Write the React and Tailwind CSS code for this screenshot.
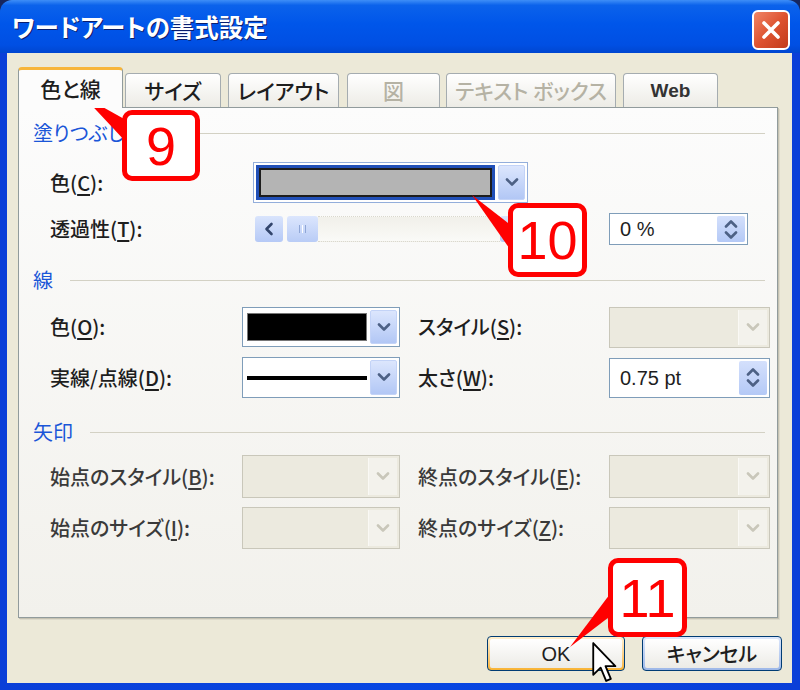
import React from "react";

// WordArt format dialog (Windows XP look, scaled 2x) with red step callouts
const jp = "font-['Noto_Sans_CJK_JP',sans-serif] [font-feature-settings:'palt']";

const Chevron = ({ up = false, color = "#4D6185" }) => (
  <svg width="14" height="9" viewBox="0 0 14 9">
    <path
      d={up ? "M2 7.5 L7 2.5 L12 7.5" : "M2 1.5 L7 6.5 L12 1.5"}
      fill="none"
      stroke={color}
      strokeWidth="2.6"
      strokeLinecap="round"
      strokeLinejoin="round"
    />
  </svg>
);

const DropBtn = ({ disabled }) =>
  disabled ? (
    <div className="w-[29px] flex items-center justify-center bg-[#F3F2EC] border-l border-[#FAF9F5]">
      <Chevron color="#C9C7BA" />
    </div>
  ) : (
    <div className="w-[27px] flex items-center justify-center rounded-[2px] border border-[#C3D3F7] bg-gradient-to-b from-[#DCE6FD] to-[#B2C7F5]">
      <Chevron />
    </div>
  );

const Combo = ({ className, disabled, children }) => (
  <div
    className={
      "flex items-stretch p-[2px] border " +
      (disabled ? "border-[#C9C7BA] bg-[#ECEADF] " : "border-[#7F9DB9] bg-white ") +
      className
    }
  >
    <div className="flex-1 flex items-stretch mr-[3px]">{children}</div>
    <DropBtn disabled={disabled} />
  </div>
);

const Spin = ({ className, value }) => (
  <div className={"flex items-stretch p-[2px] border border-[#7F9DB9] bg-white " + className}>
    <div className="flex-1 flex items-center pl-[8px] text-[20px] text-[#1E1E1E] font-['Liberation_Sans',sans-serif]">
      {value}
    </div>
    <div className="w-[28px] flex flex-col items-center justify-center gap-[3px] rounded-[2px] bg-gradient-to-b from-[#D4E0FC] to-[#B4C9F6]">
      <Chevron up />
      <Chevron />
    </div>
  </div>
);

const Label = ({ className = "", children }) => (
  <div className={"text-[20px] leading-[24px] font-medium text-[#1E1E1E] whitespace-nowrap " + className}>{children}</div>
);

const Key = ({ children }) => <span className="underline underline-offset-[3px]">{children}</span>;

const Header = ({ children }) => (
  <div className="h-[20px] flex items-center pl-[14px] pr-[12px]">
    <span className="text-[20px] leading-[20px] text-[#1A56D8]">{children}</span>
    <div className="flex-1 h-px ml-[17px] bg-[#D3D1C4]" />
  </div>
);

const Tab = ({ className, selected, disabled, children }) => (
  <div
    className={
      "flex items-center justify-center rounded-t-[4px] border border-b-0 text-[21px] font-medium " +
      (selected
        ? "h-[41px] z-10 border-[#919B9C] border-t-[3px] border-t-[#F7B53A] bg-[#FCFCFC] text-[#1E1E1E] "
        : "h-[35px] mt-[6px] border-[#A5ACB0] bg-gradient-to-b from-white to-[#ECEBE5] " +
          (disabled ? "text-[#B5B2A4] " : "text-[#1E1E1E] ")) +
      className
    }
  >
    {children}
  </div>
);

const Callout = ({ className, n }) => (
  <div
    className={
      "absolute flex items-center justify-center rounded-[10px] border-[5px] border-[#FF0000] bg-white text-[#FF0000] text-[54px] leading-none font-['Liberation_Sans_Narrow','Liberation_Sans',sans-serif] " +
      className
    }
  >
    {n}
  </div>
);

export default function App() {
  return (
    <div className={"relative w-[800px] h-[690px] bg-[#16265e] overflow-hidden " + jp}>
      <div className="h-full flex flex-col rounded-t-[12px] overflow-hidden">
        {/* title bar */}
        <div className="h-[53px] flex items-center justify-between pl-[12px] pr-[10px] bg-[linear-gradient(to_bottom,#3E8EF7_0%,#0B62EB_10%,#0056EA_45%,#004FE3_85%,#0046D0_100%)]">
          <span className="text-white text-[24.5px] font-bold [text-shadow:1px_1px_0_#0A1E6E] mt-[2px]">
            ワードアートの書式設定
          </span>
          <div className="w-[38px] h-[40px] mt-[6px] rounded-[6px] border-2 border-white flex items-center justify-center bg-gradient-to-br from-[#F08566] via-[#DE5330] to-[#C23C1B]">
            <svg width="22" height="22" viewBox="0 0 22 22">
              <path d="M4 4 L18 18 M18 4 L4 18" stroke="white" strokeWidth="3.6" strokeLinecap="round" />
            </svg>
          </div>
        </div>

        {/* frame + body */}
        <div className="flex-1 flex flex-col pl-[7px] pr-[8px] pb-[7px] bg-[linear-gradient(to_right,#0A3FD8,#0847E2_50%,#0A3FD8)]">
          <div className="flex-1 flex flex-col bg-[#ECE9D8] pt-[14px]">
            {/* tabs */}
            <div className="flex items-start pl-[11px] -mb-px">
              <Tab selected className="w-[105px]">色と線</Tab>
              <Tab className="ml-[2px] w-[96px]">サイズ</Tab>
              <Tab className="ml-[7px] w-[111px]">レイアウト</Tab>
              <Tab disabled className="ml-[8px] w-[93px]">図</Tab>
              <Tab disabled className="ml-[6px] w-[170px]">テキスト ボックス</Tab>
              <Tab className="ml-[7px] w-[95px]">
                <span className="font-['Liberation_Sans',sans-serif] font-bold text-[19px] text-[#333]">Web</span>
              </Tab>
            </div>

            {/* tab page */}
            <div className="ml-[11px] w-[760px] h-[511px] flex flex-col border border-[#919B9C] bg-gradient-to-b from-[#FCFCFC] to-[#F2F1EC] shadow-[1px_1px_0_#C5C2B2,2px_2px_0_#DDDACB]">
              <div className="mt-[15px]">
                <Header>塗りつぶし</Header>
              </div>

              <div className="mt-[19px] h-[41px] flex items-center pl-[31px]">
                <Label className="w-[203px]">
                  色(<Key>C</Key>):
                </Label>
                <Combo className="w-[275px] h-[41px] border-[#93AEDB]">
                  <div className="flex-1 p-[3px] bg-[#2150B8]">
                    <div className="h-full border-2 border-[#1D1D1D] bg-[#B4B4B4]" />
                  </div>
                </Combo>
              </div>

              <div className="mt-[10px] h-[32px] flex items-center pl-[31px]">
                <Label className="w-[205px]">
                  透過性(<Key>T</Key>):
                </Label>
                <div className="w-[273px] h-[26px] flex items-stretch">
                  <div className="w-[28px] flex items-center justify-center rounded-[3px] bg-gradient-to-b from-[#D9E4FC] to-[#B5C9F6]">
                    <svg width="10" height="14" viewBox="0 0 10 14">
                      <path d="M7.5 2 L2.5 7 L7.5 12" fill="none" stroke="#32456C" strokeWidth="2.6" strokeLinecap="round" strokeLinejoin="round" />
                    </svg>
                  </div>
                  <div className="ml-[4px] w-[31px] flex items-center justify-center gap-[2px] rounded-[3px] bg-gradient-to-b from-[#DCE6FD] to-[#B9CCF6]">
                    <div className="w-px h-[8px] bg-[#8FA6D6]" />
                    <div className="w-px h-[8px] bg-white" />
                    <div className="w-px h-[8px] bg-[#8FA6D6]" />
                  </div>
                  <div className="flex-1 border-y border-dotted border-[#DAD8CE] bg-gradient-to-b from-[#F1F0EA] to-[#FAFAF7]" />
                  <div className="w-[28px] rounded-[3px] bg-gradient-to-b from-[#D9E4FC] to-[#B5C9F6]" />
                </div>
                <Spin className="ml-[81px] w-[139px] h-[32px]" value="0 %" />
              </div>

              <div className="mt-[25px]">
                <Header>線</Header>
              </div>

              <div className="mt-[17px] h-[40px] flex items-center pl-[31px]">
                <Label className="w-[192px]">
                  色(<Key>O</Key>):
                </Label>
                <Combo className="w-[158px] h-[40px]">
                  <div className="flex-1 my-[3px] ml-[2px] border border-[#777] bg-black" />
                </Combo>
                <Label className="ml-[18px] w-[191px]">
                  スタイル(<Key>S</Key>):
                </Label>
                <Combo disabled className="w-[161px] h-[41px]" />
              </div>

              <div className="mt-[10px] h-[41px] flex items-center pl-[31px]">
                <Label className="w-[192px]">
                  実線/点線(<Key>D</Key>):
                </Label>
                <Combo className="w-[158px] h-[41px]">
                  <div className="flex-1 flex items-center pl-[2px]">
                    <div className="w-full h-[4px] bg-black" />
                  </div>
                </Combo>
                <Label className="ml-[18px] w-[191px]">
                  太さ(<Key>W</Key>):
                </Label>
                <Spin className="w-[161px] h-[40px]" value="0.75 pt" />
              </div>

              <div className="mt-[24px]">
                <Header>矢印</Header>
              </div>

              <div className="mt-[13px] h-[43px] flex items-center pl-[31px]">
                <Label className="w-[192px] text-[#3A3A3A]">
                  始点のスタイル(<Key>B</Key>):
                </Label>
                <Combo disabled className="w-[158px] h-[43px]" />
                <Label className="ml-[18px] w-[191px] text-[#3A3A3A]">
                  終点のスタイル(<Key>E</Key>):
                </Label>
                <Combo disabled className="w-[161px] h-[43px]" />
              </div>

              <div className="mt-[9px] h-[42px] flex items-center pl-[31px]">
                <Label className="w-[192px] text-[#3A3A3A]">
                  始点のサイズ(<Key>I</Key>):
                </Label>
                <Combo disabled className="w-[158px] h-[42px]" />
                <Label className="ml-[18px] w-[191px] text-[#3A3A3A]">
                  終点のサイズ(<Key>Z</Key>):
                </Label>
                <Combo disabled className="w-[161px] h-[42px]" />
              </div>
            </div>

            {/* buttons */}
            <div className="mt-[18px] flex justify-end gap-[17px] pr-[10px]">
              <div className="w-[138px] h-[35px] rounded-[4px] border border-[#003C74] p-[2px] bg-gradient-to-b from-[#FFF0CF] to-[#F8B330]">
                <div className="h-full rounded-[2px] flex items-center justify-center bg-gradient-to-b from-white to-[#ECEBE6] text-[20px] text-[#1E1E1E] font-['Liberation_Sans',sans-serif]">
                  OK
                </div>
              </div>
              <div className="w-[140px] h-[35px] rounded-[4px] border border-[#003C74] p-[2px] bg-gradient-to-b from-[#DCE7FB] to-[#9DB7E8]">
                <div className="h-full rounded-[2px] flex items-center justify-center bg-gradient-to-b from-white to-[#ECEBE6] text-[20px] font-medium text-[#1E1E1E]">
                  キャンセル
                </div>
              </div>
            </div>
          </div>
        </div>
      </div>

      {/* callout pointers */}
      <svg className="absolute inset-0 pointer-events-none" width="800" height="690">
        <polygon points="83,96 126,120 126,142" fill="#FF0000" />
        <polygon points="472,195 512,226 512,252" fill="#FF0000" />
        <polygon points="570,647 613,590 613,614" fill="#FF0000" />
      </svg>

      <Callout className="left-[122px] top-[110px] w-[78px] h-[71px]" n="9" />
      <Callout className="left-[508px] top-[203px] w-[79px] h-[74px]" n="10" />
      <Callout className="left-[608px] top-[558px] w-[79px] h-[79px]" n="11" />

      {/* mouse cursor */}
      <svg className="absolute left-[591px] top-[641px]" width="27" height="43" viewBox="0 0 13 21">
        <polygon
          points="1,1 1,16.5 4.6,13 7.3,19.5 9.6,18.5 7,12.3 11.8,12.3"
          fill="white"
          stroke="black"
          strokeWidth="0.9"
          strokeLinejoin="round"
        />
      </svg>
    </div>
  );
}
